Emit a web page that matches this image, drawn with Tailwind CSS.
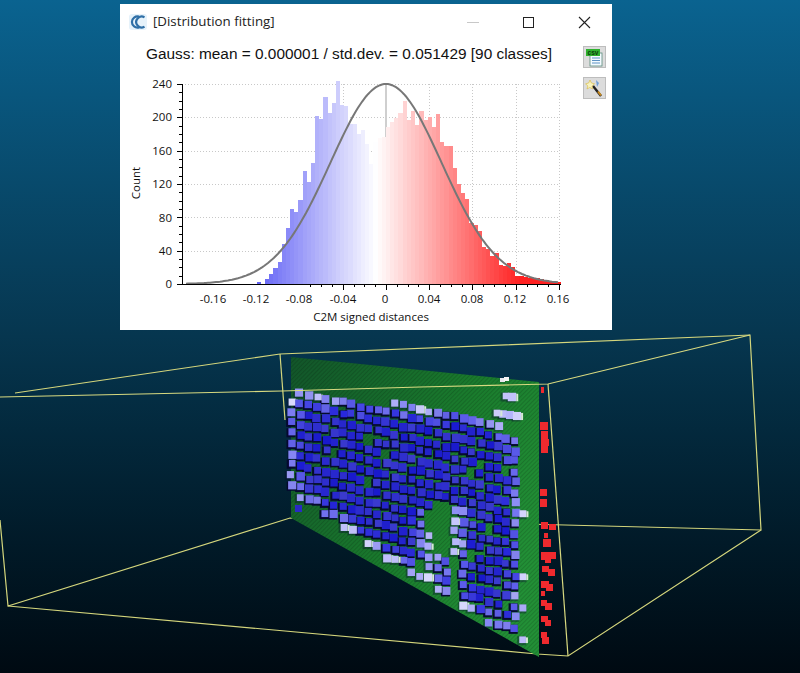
<!DOCTYPE html>
<html lang="en">
<head>
    <meta charset="UTF-8" />
    <title>Distribution fitting</title>
    <script src="https://cdn.jsdelivr.net/npm/@tailwindcss/browser@4"></script>
</head>
<body class="relative w-[800px] h-[673px] overflow-hidden bg-gradient-to-b from-[#0a6390] via-[#06364f] via-50% to-[#000a12]">

    <!-- 3D view: point cloud and bounding box -->
    <svg id="scene" class="absolute inset-0 blur-[0.5px]" width="800" height="673" viewBox="0 0 800 673">
        <defs>
            <linearGradient id="greenFill" x1="0" y1="0" x2="1" y2="0.6">
                <stop offset="0" stop-color="#12552a"/>
                <stop offset="0.6" stop-color="#1a7c2d"/>
                <stop offset="1" stop-color="#228f36"/>
            </linearGradient>
            <pattern id="hatch" width="3" height="3" patternUnits="userSpaceOnUse" patternTransform="rotate(45)">
                <rect width="1" height="3" fill="#000" opacity="0.14"/>
            </pattern>
        </defs>
        <g fill="none" stroke="#d4d67c" stroke-width="1.2">
            <path d="M15 393 L280 354 L750 335 L761 530 L290 518 L8 606 L0 520"/>
            <path d="M8 606 L263 629 L537 654 L568 656 L761 530"/>
            <path d="M280 354 L285 420"/>
        </g>
        <polygon points="291,357 539,382 539,657 291,518" fill="url(#greenFill)"/>
        <polygon points="291,357 539,382 539,657 291,518" fill="url(#hatch)"/>
        <g id="points"></g>
        <g fill="none" stroke="#d8da80" stroke-width="1.2">
            <path d="M0 397 L282 391 L420 387 L548 384 L750 335"/>
            <path d="M548 384 L558 520 L568 656"/>
        </g>
    </svg>

    <!-- Distribution fitting window -->
    <div class="absolute left-[120px] top-[4px] w-[492px] h-[326px] bg-white flex flex-col font-['Liberation_Sans',sans-serif] text-[#111]">
        <div class="h-[36px] flex items-center pl-[9px] shrink-0">
            <svg width="18" height="16" viewBox="0 0 18 16" fill="none" stroke="#2f6fa6" stroke-width="2.2">
                <rect x="0" y="0" width="18" height="16" fill="#e6f2fa" stroke="none" rx="3"/>
                <path d="M10 2.6 A5.6 5.6 0 1 0 10 13.4"/>
                <path d="M15.5 3.4 A5.4 5.4 0 1 0 15.5 12.6"/>
            </svg>
            <span class="ml-[6px] text-[13.3px] font-['Open_Sans',sans-serif] text-[#222]">[Distribution fitting]</span>
            <div class="ml-auto flex items-center">
                <div class="w-[12px] h-px bg-[#c8c8c8] mr-[44px]"></div>
                <div class="w-[11px] h-[11px] border border-[#222] mr-[44px]"></div>
                <svg class="mr-[21px]" width="13" height="13" viewBox="0 0 13 13" stroke="#222" stroke-width="1.1">
                    <path d="M1 1 L12 12 M12 1 L1 12"/>
                </svg>
            </div>
        </div>
        <div class="flex flex-1">
            <div class="w-[462px] flex flex-col">
                <h1 class="h-[30px] pb-[2px] pr-[4px] flex items-center justify-center text-[15.4px] font-normal whitespace-nowrap">Gauss: mean = 0.000001 / std.dev. = 0.051429 [90 classes]</h1>
                <svg id="chart" class="font-['Open_Sans',sans-serif]" width="462" height="256" viewBox="120 70 462 256">
                    <g id="grid"></g>
                    <rect x="385" y="84" width="2" height="200" fill="#cfcfcf"/>
                    <g id="bars" shape-rendering="crispEdges"></g>
                    <polyline id="curve" fill="none" stroke="#777" stroke-width="2"/>
                    <g id="ticks" stroke="#000" stroke-width="1"></g>
                    <g font-size="11.5" fill="#111" text-anchor="end">
                        <text x="172" y="88">240</text>
                        <text x="172" y="121">200</text>
                        <text x="172" y="155">160</text>
                        <text x="172" y="188">120</text>
                        <text x="172" y="222">80</text>
                        <text x="172" y="255">40</text>
                        <text x="172" y="288">0</text>
                    </g>
                    <g font-size="11.5" fill="#111" text-anchor="middle">
                        <text x="213" y="303">-0.16</text>
                        <text x="256" y="303">-0.12</text>
                        <text x="299" y="303">-0.08</text>
                        <text x="343" y="303">-0.04</text>
                        <text x="385" y="303">0</text>
                        <text x="429" y="303">0.04</text>
                        <text x="472" y="303">0.08</text>
                        <text x="515" y="303">0.12</text>
                        <text x="558" y="303">0.16</text>
                        <text x="371" y="321">C2M signed distances</text>
                        <text transform="translate(140 183) rotate(-90)">Count</text>
                    </g>
                </svg>
            </div>
            <div class="pl-px pt-[6px] flex flex-col gap-[9px]">
                <button class="w-[23px] h-[22px] bg-[#dcdcdc] border border-[#bdbdbd] flex items-center justify-center">
                    <svg width="21" height="20" viewBox="0 0 21 20">
                        <rect x="6" y="6" width="12" height="13" fill="#f4fbff" stroke="#5b8a7a" stroke-width="0.8"/>
                        <path d="M8 11 H16 M8 13.5 H16 M8 16 H16" stroke="#5f93c4" stroke-width="1"/>
                        <rect x="2" y="2" width="14" height="7" fill="#2fb12f"/>
                        <text x="9" y="8" font-size="6.5" font-weight="700" text-anchor="middle" fill="#0b3d0b">csv</text>
                    </svg>
                </button>
                <button class="w-[23px] h-[22px] bg-[#dcdcdc] border border-[#bdbdbd] flex items-center justify-center">
                    <svg width="21" height="20" viewBox="0 0 21 20">
                        <path d="M9 8 L17 18" stroke="#222" stroke-width="2.4"/>
                        <path d="M14 13.5 L17 17.5" stroke="#c98a1e" stroke-width="2"/>
                        <path d="M6 2 L7.4 5 L10.5 5.8 L8 8 L8.5 11 L5.8 9.4 L3 11 L3.8 8 L1.6 5.8 L4.7 5 Z" fill="#f7f3c0" stroke="#d8b93a" stroke-width="0.6"/>
                        <path d="M12 2 L15 5 L13 9 Z" fill="#6f9fd8"/>
                    </svg>
                </button>
            </div>
        </div>
    </div>

    <script>
        const NS = 'http://www.w3.org/2000/svg';
        function add(parent, tag, attrs) {
            const el = document.createElementNS(NS, tag);
            for (const k in attrs) el.setAttribute(k, attrs[k]);
            parent.appendChild(el);
            return el;
        }

        // ====== Chart ======
        const X0 = 386, PX_PER_UNIT = 1081, BASE = 284;
        const counts = [2.3, 0.5, 5, 10, 16, 22, 40, 56, 75, 72, 84, 113, 102, 121, 168, 165, 187, 171, 181, 203, 179, 178, 160, 160, 150, 154, 140, 120, 142, 146, 147,
                        157, 162, 166, 171, 183, 164, 173, 159, 173, 164, 167, 157, 170, 142, 138, 138, 116, 100, 91, 85, 61, 59, 53, 37, 35, 28, 31, 19, 18, 21, 17, 8, 8, 7, 6, 6, 6, 5, 4, 3, 2, 2];

        const grid = document.getElementById('grid');
        const ticks = document.getElementById('ticks');
        const barsG = document.getElementById('bars');

        for (let c = 0; c <= 240; c += 10) {
            const y = Math.round(BASE - c * 0.8333) + 0.5;
            const major = c % 40 === 0;
            add(ticks, 'line', { x1: major ? 177 : 179, x2: 182, y1: y, y2: y });
            if (major && c > 0) add(grid, 'line', { x1: 182, x2: 559, y1: y, y2: y, stroke: '#c8c8c8', 'stroke-dasharray': '1 2' });
        }
        for (let i = -7; i <= 16; i++) {
            const x = Math.round(X0 + i * 0.01 * PX_PER_UNIT) + 0.5;
            const major = i % 4 === 0;
            add(ticks, 'line', { x1: x, x2: x, y1: BASE, y2: BASE + (major ? 6 : 3) });
            if (major) add(grid, 'line', { x1: x, x2: x, y1: 84, y2: BASE, stroke: '#c8c8c8', 'stroke-dasharray': '1 2' });
        }
        add(ticks, 'line', { x1: 182, x2: 561, y1: BASE + 0.5, y2: BASE + 0.5 });
        add(ticks, 'line', { x1: 182.5, x2: 182.5, y1: 84, y2: BASE + 1 });

        function binColor(x) {
            if (x < 376) {
                const t = Math.min(1, (376 - x) / 119);
                const v = Math.round(255 - t * 158);
                return `rgb(${v},${v},${Math.round(255 - t * 10)})`;
            }
            const t = Math.min(1, (x - 376) / 144);
            const v = Math.round(255 - t * 222);
            return `rgb(255,${v},${v})`;
        }
        counts.forEach((h, i) => {
            const x = Math.round(256.7 + i * 4.17);
            const next = Math.round(256.7 + (i + 1) * 4.17);
            add(barsG, 'rect', { x: x, y: Math.round(284 - h), width: next - x, height: Math.round(h), fill: binColor(x + 2) });
        });

        let pts = '';
        for (let x = 186; x <= 559; x += 2) {
            const d = (x - X0) / 55.6;
            pts += `${x},${(BASE - 200 * Math.exp(-d * d / 2)).toFixed(1)} `;
        }
        document.getElementById('curve').setAttribute('points', pts);

        // ====== Point cloud ======
        let seed = 20240;
        function rnd() {
            seed = (seed + 0x6D2B79F5) | 0;
            let t = Math.imul(seed ^ (seed >>> 15), 1 | seed);
            t = (t + Math.imul(t ^ (t >>> 7), 61 | t)) ^ t;
            return ((t ^ (t >>> 14)) >>> 0) / 4294967296;
        }
        const pointsG = document.getElementById('points');

        const topEdge = x => x < 470 ? 392 + (x - 296) * 0.1 : 409 + (x - 470) * 0.55;
        const bottomEdge = x => x < 445 ? Math.max(506, 506 + (x - 310) * 0.68) : 512 + (x - 291) * 0.563;
        const leftEdge = y => y < 420 ? 296 - (y - 392) * 0.4 : (y > 470 ? 285 + (y - 470) * 0.3 : 285);
        const inGap = (x, y) => (y > 505 && y < 552 && x > 430 && x < 453) || (y >= 552 && x > 452 && x < 462);

        const cloud = [];
        for (let r = -14; r < 30; r++) {
            for (let col = 0; col < 30; col++) {
                const x = 283 + col * 8.6 + (rnd() - 0.5) * 2.5;
                const y = 392 + r * 10.4 + (x - 296) * 0.22 + (rnd() - 0.5) * 2.5;
                if (x < leftEdge(y) || x > 523 || y < topEdge(x) || y > bottomEdge(x) || inGap(x, y)) continue;
                if (rnd() < 0.04) continue;
                const edge = Math.min(x - leftEdge(y), 523 - x, y - topEdge(x), bottomEdge(x) - y,
                    y > 505 ? Math.min(Math.abs(x - 430), Math.abs(x - 455)) : 99);
                cloud.push({ x, y, t: Math.min(1, Math.max(0, 1 - edge / 22 + (rnd() - 0.5) * 0.4)) });
            }
        }
        // sparse groups in the upper right of the plane
        [[506, 396], [512, 397], [503, 414], [510, 415], [517, 416], [497, 413]].forEach(p => cloud.push({ x: p[0], y: p[1], t: 0.95 }));

        // dark shadow under each point, sitting low and to the left
        cloud.forEach(p => add(pointsG, 'rect', { x: p.x - 5.5, y: p.y - 3.5, width: 9, height: 9, fill: '#05062e', opacity: p.t > 0.75 ? 0.35 : 0.95 }));
        cloud.forEach(p => {
            const s = 6.5 + rnd() * 2;
            const r = Math.round(24 + p.t * p.t * 165 + rnd() * 36);
            const b = Math.round(205 + p.t * 48);
            add(pointsG, 'rect', { x: p.x - s / 2, y: p.y - s / 2, width: s, height: s, fill: `rgb(${r},${r},${b})` });
            if (p.t > 0.92) add(pointsG, 'rect', { x: p.x + s / 2, y: p.y - s / 2 + 1, width: 2, height: s - 1, fill: '#d6e8d6' });
        });
        add(pointsG, 'rect', { x: 295, y: 505, width: 7, height: 7, fill: '#2a2ac4' });
        // stray white points on the top edge
        add(pointsG, 'rect', { x: 500, y: 378, width: 5, height: 4, fill: '#e8e8ee' });
        add(pointsG, 'rect', { x: 504, y: 377, width: 5, height: 4, fill: '#f4f4f4' });

        // red points outside of the plane
        const reds = [[541,387,3,6],[540,422,8,8],[541,431,7,8],[541,439,8,7],[541,446,7,7],[540,489,7,7],[540,499,7,8],
                      [541,522,7,7],[549,524,7,6],[544,533,4,5],[543,539,8,8],[541,552,7,8],[548,552,8,7],[545,557,6,6],[542,566,7,6],[548,569,7,7],
                      [541,581,8,7],[546,584,7,7],[541,591,4,5],[541,600,6,6],[545,603,7,7],[541,616,7,6],[545,620,6,6],[541,632,6,6],[542,637,7,7]];
        reds.forEach(p => add(pointsG, 'rect', { x: p[0], y: p[1], width: p[2], height: p[3], fill: '#ee2a2e' }));
    </script>
</body>
</html>
